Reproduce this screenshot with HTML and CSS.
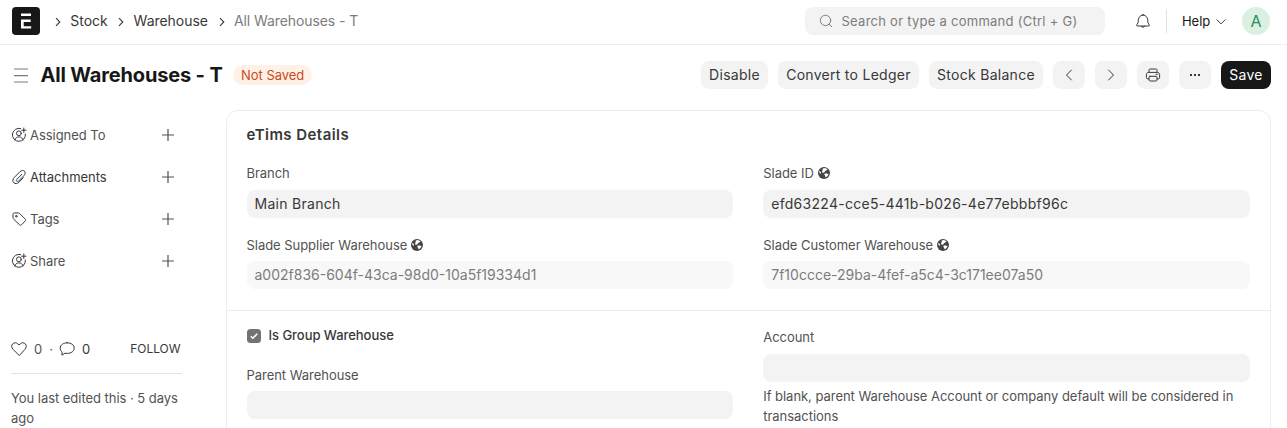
FILE: index.html
```html
<!DOCTYPE html>
<html lang="en">
<head>
<meta charset="utf-8">
<title>All Warehouses - T</title>
<link rel="stylesheet" href="styles.css">
</head>
<body>
<svg class="sprite" xmlns="http://www.w3.org/2000/svg">
  <symbol id="chev" viewBox="0 0 6 10"><path d="M1 1.2 4.8 5 1 8.8"/></symbol>
  <symbol id="user-plus" viewBox="0 0 16 16"><path d="M9.600 1.500A6.500 6.500 0 1 0 14.400 7M3.800 13c.5-2 2-3.100 4.100-3.100s3.600 1.100 4.100 3.100M12.800 1v4.400M10.600 3.200H15"/><circle cx="7.900" cy="6.300" r="2.400"/></symbol>
  <symbol id="plus" viewBox="0 0 14 14"><path d="M7 1v12M1 7h12"/></symbol>
  <symbol id="globe" viewBox="0 0 12 12"><circle cx="6" cy="6" r="6" fill="#454545"/><path fill="#fff" d="M4.800 1.500 7 1l2.600 1.300L8.200 3.500 7 4.200l-.8 1.300-1.300.3-.9-.9.500-1.300zM1.200 4l1.200.6.800 1.500-.8.600-1-.9zM6.200 7l2-.7 1.500.8 1-.3-1 2-1.900 1.700-.7-1.400z"/></symbol>
</svg>
<header class="navbar">
  <div class="logo"><svg width="28" height="28" viewBox="0 0 28 28"><path fill="#fff" d="M9 6.500h10v2.400H9zM9 12.600h9.700V15h-7v4.200h7.500v2.400H9z"/></svg></div>
  <nav class="crumbs">
    <svg class="chev"><use href="#chev"/></svg><a>Stock</a>
    <svg class="chev"><use href="#chev"/></svg><a>Warehouse</a>
    <svg class="chev"><use href="#chev"/></svg><a class="current">All Warehouses - T</a>
  </nav>
  <div class="search"><svg class="line" width="14" height="14" viewBox="0 0 14 14"><circle cx="6.500" cy="6.400" r="5.200"/><path d="m10.300 10.300 2.400 2.400"/></svg><span>Search or type a command (Ctrl + G)</span></div>
  <svg class="bell line" width="16" height="16" viewBox="0 0 16 16"><path d="M3.200 7.200a4.800 5.100 0 0 1 9.600 0v2.100l1.500 2.800c.2.500 0 .9-.5.900H2.200c-.5 0-.7-.4-.5-.9l1.500-2.800zM6.300 13.200c.2 1.500 3.200 1.500 3.400 0M7 2.100c.1-1 1.900-1 2 0"/></svg>
  <span class="vline"></span>
  <span class="help">Help</span>
  <svg class="down line" width="10" height="6" viewBox="0 0 10 6"><path d="m1 .9 4 4 4-4"/></svg>
  <span class="avatar">A</span>
</header>
<section class="head">
  <svg class="burger" width="14" height="15" viewBox="0 0 14 15"><path d="M0 1h14M0 7.700h14M0 14h14"/></svg>
  <h1>All Warehouses - T</h1>
  <span class="pill">Not Saved</span>
  <div class="actions">
    <button class="b1">Disable</button>
    <button class="b2">Convert to Ledger</button>
    <button class="b3">Stock Balance</button>
    <button class="ib"><svg class="line" width="8" height="12" viewBox="0 0 8 12"><path d="M6.400 1 1.500 6l4.900 5"/></svg></button>
    <button class="ib"><svg class="line" width="8" height="12" viewBox="0 0 8 12"><path d="m1.600 1 4.900 5-4.900 5"/></svg></button>
    <button class="ib"><svg class="line" width="16" height="16" viewBox="0 0 16 16"><path d="M4 5.400V3.200C4 2.300 4.500 2 5.200 2h5.600c.7 0 1.200.3 1.200 1.200v2.200M4 11.900H2.800c-.9 0-1.400-.5-1.400-1.300V7.700c0-1.400.9-2.300 2.200-2.300h8.800c1.300 0 2.200.9 2.200 2.300v2.900c0 .8-.5 1.300-1.400 1.300H12M5 9.300h6c.7 0 1 .3 1 1v2.500c0 .8-.4 1.200-1.200 1.200H5.200c-.8 0-1.200-.4-1.200-1.200v-2.500c0-.7.3-1 1-1zM11 7.300h1.400"/></svg></button>
    <button class="ib"><svg width="12" height="4" viewBox="0 0 12 4"><path fill="#383838" d="M1 1h2v2H1zM5 1h2v2H5zM9 1h2v2H9z"/></svg></button>
    <button class="save">Save</button>
  </div>
</section>
<main class="layout">
  <aside class="side">
    <div class="row"><svg class="line ic"><use href="#user-plus"/></svg><span>Assigned To</span><svg class="plus"><use href="#plus"/></svg></div>
    <div class="row dark"><svg class="line ic" viewBox="0 0 16 16"><path d="m10.800 5.300-4.900 5c-.8.800-.7 1.500-.2 2 .6.500 1.300.400 2-.3l5.300-5.500c1.500-1.600 1.500-3.200.4-4.300-1.200-1.100-2.900-1-4.300.400L3.300 8.400C1.500 10.200 1.400 12.300 2.800 13.700c1.400 1.300 3.500 1.200 5.100-.4l4.300-4.500"/></svg><span>Attachments</span><svg class="plus"><use href="#plus"/></svg></div>
    <div class="row"><svg class="line ic" viewBox="0 0 16 16"><path d="M2 3.300C2 2.400 2.500 1.900 3.400 1.900l3.900.1c.5 0 .9.200 1.300.5l5.600 5.600c.6.600.6 1.300 0 1.900l-3.700 3.800c-.6.600-1.300.6-1.900 0L2.700 8.200C2.300 7.800 2.100 7.400 2.100 6.900z"/><circle cx="5.300" cy="5.200" r=".8"/></svg><span>Tags</span><svg class="plus"><use href="#plus"/></svg></div>
    <div class="row"><svg class="line ic"><use href="#user-plus"/></svg><span>Share</span><svg class="plus"><use href="#plus"/></svg></div>
    <div class="stats">
      <svg class="line" width="16" height="16" viewBox="0 0 16 16"><path d="M8 14.300 2 8.300C.4 6.600.3 4.300 1.600 2.900c1.500-1.500 3.900-1.500 5.200 0L8 4.100l1.200-1.200c1.300-1.500 3.700-1.500 5.200 0 1.300 1.400 1.200 3.700-.4 5.400z"/></svg>
      <span class="n1">0</span><span class="dot">·</span>
      <svg class="line" width="16" height="16" viewBox="0 0 16 16"><path d="M8.200 1.800c4 0 7 2.200 7 5.300s-3 5.300-7 5.300c-.8 0-1.500-.1-2.200-.2L2.900 14.200l.2-3.200C1.800 10 1.200 8.600 1.200 7.100c0-3.100 3-5.300 7-5.300z"/></svg>
      <span class="n2">0</span><span class="follow">FOLLOW</span>
    </div>
    <p class="edited">You last edited this · 5 days ago</p>
  </aside>
  <div class="card">
    <section class="sec top">
      <h2>eTims Details</h2>
      <div class="grid">
        <div class="field"><label>Branch</label><div class="input">Main Branch</div></div>
        <div class="field"><label>Slade ID <svg class="globe"><use href="#globe"/></svg></label><div class="input">efd63224-cce5-441b-b026-4e77ebbbf96c</div></div>
        <div class="field"><label>Slade Supplier Warehouse <svg class="globe"><use href="#globe"/></svg></label><div class="input ro">a002f836-604f-43ca-98d0-10a5f19334d1</div></div>
        <div class="field"><label>Slade Customer Warehouse <svg class="globe"><use href="#globe"/></svg></label><div class="input ro">7f10ccce-29ba-4fef-a5c4-3c171ee07a50</div></div>
      </div>
    </section>
    <section class="sec bottom">
      <div>
        <div class="check"><svg width="14" height="14" viewBox="0 0 14 14"><rect width="14" height="14" rx="3.500" fill="#737373"/><path d="m3.800 7.300 2 2 4.400-4.600" fill="none" stroke="#fff" stroke-width="1.500"/></svg><span>Is Group Warehouse</span></div>
        <div class="field parent"><label>Parent Warehouse</label><div class="input"></div></div>
      </div>
      <div class="field acct"><label>Account</label><div class="input"></div><p>If blank, parent Warehouse Account or company default will be considered in transactions</p></div>
    </section>
  </div>
</main>
</body>
</html>
```
FILE: styles.css
```css
* { box-sizing: border-box; }
body { margin: 0; width: 1287px; height: 428px; overflow: hidden; background: #fff; color: #383838; font: 420 13px/20px Inter, sans-serif; letter-spacing: -0.003em; }
h1, h2, p { margin: 0; }
svg { display: block; flex: none; }
.sprite { display: none; }
.line { fill: none; stroke: #383838; stroke-width: 1; stroke-linecap: round; stroke-linejoin: round; }
.navbar { display: flex; align-items: center; height: 45px; padding: 0 17px 3px 12px; border-bottom: 1px solid #ededed; }
.logo { width: 28px; height: 28px; border-radius: 4px; background: #171717; overflow: hidden; }
.crumbs { display: flex; align-items: center; font-size: 14px; margin-left: 15px; flex: 1; }
.chev { width: 6px; height: 10px; margin-top: 2px; fill: none; stroke: #383838; stroke-width: 1.1; }
.crumbs a { margin: 0 10.7px 0 9.3px; }
.crumbs .current { color: #7c7c7c; letter-spacing: -0.006em; }
.search { display: flex; align-items: center; gap: 9px; width: 300px; height: 28px; padding-left: 14px; border-radius: 8px; background: #f3f3f3; color: #7c7c7c; letter-spacing: 0.02em; }
.search svg { stroke: #7c7c7c; }
.bell { margin-left: 30px; }
.vline { width: 1px; height: 24px; margin-left: 15px; background: #e2e2e2; }
.help { width: 28px; margin-left: 15.5px; color: #171717; }
.down { margin: 2px 0 0 6px; }
.avatar { width: 28px; height: 28px; margin-left: 16px; border-radius: 50%; background: #daf0e1; color: #278f5e; font-size: 16px; line-height: 28px; text-align: center; }
.head { display: flex; align-items: center; height: 60px; padding: 0 16px 0 14px; }
.burger { stroke: #7c7c7c; stroke-width: 1.2; }
h1 { margin-left: 12.5px; color: #171717; font-size: 20px; font-weight: 700; line-height: 24px; letter-spacing: -0.008em; }
.pill { height: 20px; margin-left: 10.5px; padding: 0 8px; border-radius: 10px; background: #fff1e7; color: #cb4a1b; }
.actions { display: flex; gap: 10px; margin-left: auto; }
button { display: flex; align-items: center; justify-content: center; height: 28px; padding: 0; border: 0; border-radius: 8px; background: #f3f3f3; color: #383838; font: 420 14px/20px Inter, sans-serif; letter-spacing: 0.02em; white-space: nowrap; }
.b1 { width: 67px; }
.b2 { width: 141px; }
.b3 { width: 114px; }
.ib { width: 32px; }
.save { width: 50px; background: #171717; color: #fff; }
.layout { display: flex; height: 323px; padding: 5px 16px 0 11px; overflow: hidden; }
.side { width: 171px; margin-right: 44px; color: #525252; }
.row { display: flex; align-items: center; height: 42px; padding-right: 7px; }
.row:first-child { margin-top: 4px; }
.row.dark { color: #383838; }
.ic { width: 16px; height: 16px; margin-right: 3px; }
.plus { width: 14px; height: 14px; margin-left: auto; stroke: #525252; stroke-width: 1.2; }
.stats { display: flex; align-items: center; height: 49px; margin-top: 43px; border-bottom: 1px solid #e2e2e2; }
.n1 { margin-left: 7px; }
.dot { margin: 0 6px 0 7px; }
.n2 { margin-left: 7px; color: #383838; }
.follow { margin: 0 1.5px 0 auto; color: #383838; font-size: 12px; }
.edited { margin-top: 14px; }
.card { width: 1045px; height: 340px; border: 1px solid #ededed; border-radius: 12px 12px 0 0; }
.sec { padding: 0 20px 0 19.5px; }
.top { height: 200px; padding-top: 13px; border-bottom: 1px solid #ededed; }
h2 { font-size: 15px; font-weight: 600; line-height: 21px; letter-spacing: 0.03em; }
.grid { display: grid; grid-template-columns: 1fr 1fr; column-gap: 30px; row-gap: 17px; margin-top: 18px; }
.field label { display: flex; align-items: center; gap: 4px; height: 20px; color: #525252; }
.globe { width: 12px; height: 12px; }
.input { height: 28px; margin-top: 7px; padding: 0 8px; border-radius: 8px; background: #f3f3f3; font-size: 14px; line-height: 28px; letter-spacing: 0.02em; }
.input.ro { margin-top: 6px; background: #f8f8f8; color: #7c7c7c; letter-spacing: 0; }
.bottom { display: grid; grid-template-columns: 1fr 1fr; column-gap: 30px; }
.check { display: flex; align-items: center; gap: 8px; height: 20px; margin: 15px 0 19px; font-weight: 500; }
.check span { height: 21px; line-height: 19px; }
.parent .input { margin-top: 6px; }
.acct { margin-top: 16px; }
.acct p { margin-top: 4px; color: #525252; }
```
